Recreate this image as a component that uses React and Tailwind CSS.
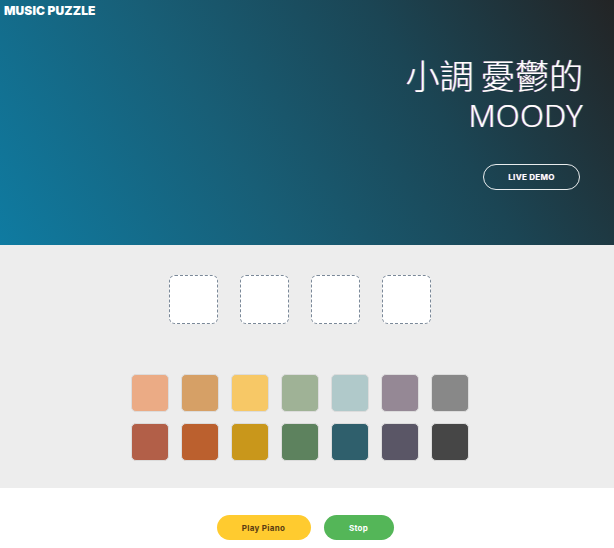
export default function App() {
  const light = ["#ebab85", "#d6a066", "#f7c866", "#9fb296", "#b0c9ca", "#958895", "#888888"];
  const dark = ["#b25f48", "#bb602e", "#c9971b", "#5d825e", "#2f5f6c", "#5a5666", "#464646"];
  return (
    <div className="w-[614px] min-h-[548px] bg-white font-['Roboto','Liberation_Sans',sans-serif]">
      <header className="h-[245px] bg-[linear-gradient(58deg,#0f7ba1_0%,#185e76_38%,#1b4554_68%,#232425_100%)] flex flex-col">
        <div className="pl-[4px] pt-[3px] text-[12px] leading-[16px] font-black text-white tracking-[0.1px] font-['Inter',sans-serif]">
          MUSIC PUZZLE
        </div>
        <div className="flex flex-col items-end pr-[31px] pt-[36px]">
          <div className="text-white text-[34px] leading-[40px] font-light font-['Noto_Sans_CJK_TC','Noto_Sans',sans-serif] [text-shadow:-1px_0_rgba(255,60,60,0.55),1px_0_rgba(60,200,255,0.6)]">
            小調 憂鬱的
          </div>
          <div className="mt-[2px] text-white text-[31px] leading-[36px] font-light tracking-[0.3px] font-['Noto_Sans',sans-serif] [text-shadow:-1px_0_rgba(255,60,60,0.55),1px_0_rgba(60,200,255,0.6)]">
            MOODY
          </div>
          <button className="mt-[31px] mr-[3px] w-[97px] h-[26px] rounded-full border-[1.5px] border-white/90 text-white text-[8px] font-bold tracking-[0.3px] font-['Inter',sans-serif] flex items-center justify-center [text-shadow:-0.5px_0_rgba(255,60,60,0.5),0.5px_0_rgba(60,200,255,0.5)]">
            LIVE DEMO
          </button>
        </div>
      </header>
      <section className="h-[243px] bg-[#ededed] flex flex-col items-center pr-[14px]">
        <div className="flex gap-[22px] pt-[30px]">
          {[0, 1, 2, 3].map((i) => (
            <div key={i} className="w-[49px] h-[49px] bg-white rounded-[6px] border border-dashed border-[#7a8898]" />
          ))}
        </div>
        <div className="mt-[50px] flex flex-col gap-[11px]">
          {[light, dark].map((row, r) => (
            <div key={r} className="flex gap-[12px]">
              {row.map((c) => (
                <div key={c} className="w-[38px] h-[38px] rounded-[5px] border border-[#dcdcdc]" style={{ backgroundColor: c }} />
              ))}
            </div>
          ))}
        </div>
      </section>
      <div className="flex justify-center gap-[13px] pt-[27px]">
        <button className="w-[94px] h-[25px] rounded-full bg-[#ffcb2f] text-[#5a3b12] text-[8px] font-bold font-['Inter',sans-serif] tracking-[0.3px] ml-[2px]">
          Play Piano
        </button>
        <button className="w-[70px] h-[25px] rounded-full bg-[#54b658] text-white text-[8px] font-bold font-['Inter',sans-serif] tracking-[0.3px] mr-[6px]">
          Stop
        </button>
      </div>
    </div>
  );
}
